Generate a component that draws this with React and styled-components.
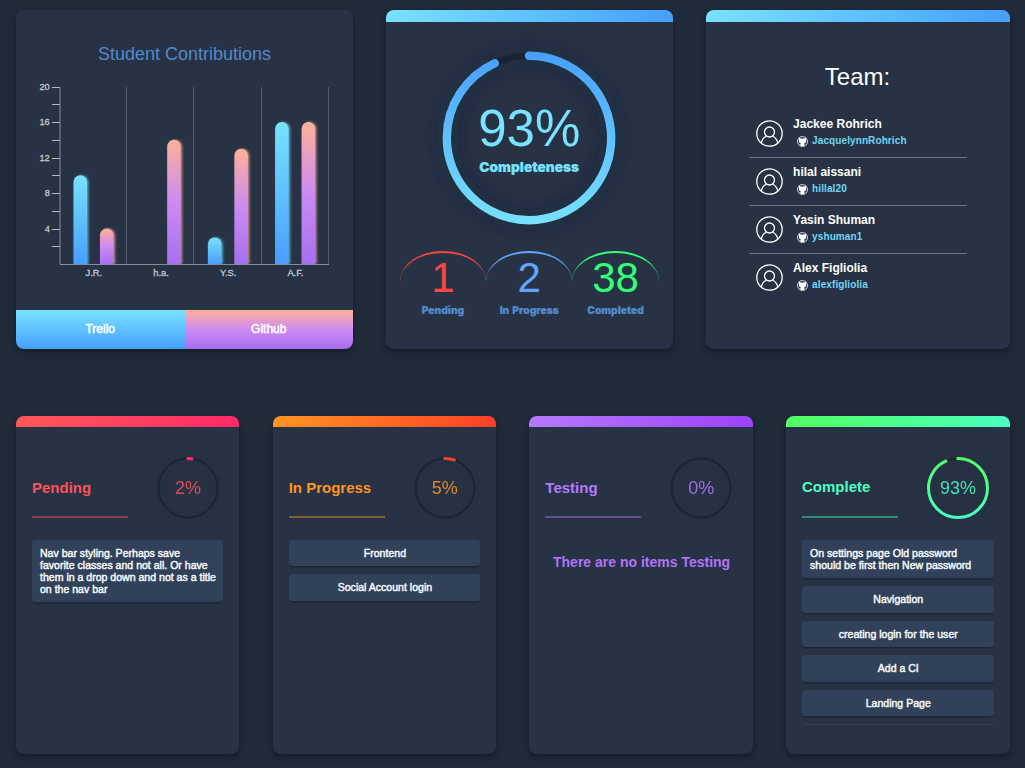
import React from "react";
import styled, { createGlobalStyle } from "styled-components";

const Global = createGlobalStyle`
  * { box-sizing: border-box; }
  body {
    margin: 0;
    background: #202b3a;
    font-family: "Liberation Sans", Arial, sans-serif;
    overflow: hidden;
  }
`;

const Page = styled.main`
  width: 1025px;
  height: 768px;
  padding: 10px 15.5px 0 16px;
  display: flex;
  flex-direction: column;
  gap: 67.5px;
`;

const TopRow = styled.section`
  display: grid;
  grid-template-columns: 337px 287px 304px;
  justify-content: space-between;
  height: 338.5px;
`;

const BoardRow = styled.section`
  display: grid;
  grid-template-columns: repeat(4, 1fr);
  column-gap: 33.2px;
  height: 338px;
`;

const Card = styled.article`
  display: flex;
  flex-direction: column;
  min-width: 0;
  border-radius: 8px;
  overflow: hidden;
  background: #273245;
  box-shadow: 0 3px 6px rgba(10, 16, 26, 0.55);
`;

const CardBar = styled.div`
  flex: none;
  height: ${(p) => (p.$thin ? 11 : 11.5)}px;
  background: linear-gradient(90deg, ${(p) => p.$from}, ${(p) => p.$to});
`;

const ChartTitle = styled.h2`
  margin: 33.5px 0 0;
  font-size: 18px;
  line-height: 21px;
  font-weight: 400;
  text-align: center;
  color: #5389c9;
`;

const ChartSvg = styled.svg`
  display: block;
  margin-top: 12.5px;
  flex: none;
  text {
    font: 9.3px "Liberation Sans", Arial, sans-serif;
    fill: #c3c8cf;
    stroke: #c3c8cf;
    stroke-width: 0.3px;
  }
`;

const Tabs = styled.div`
  display: grid;
  grid-template-columns: 1fr 1fr;
  height: 38.5px;
  margin-top: auto;
`;

const Tab = styled.button`
  border: 0;
  padding: 0;
  font: 12px "Liberation Sans", Arial, sans-serif;
  -webkit-text-stroke: 0.5px #fff;
  color: #fff;
  background: ${(p) =>
    p.$pink
      ? "linear-gradient(#ffb199, #cc8bf2 50%, #a66ff0)"
      : "linear-gradient(#78e2ff, #479fff)"};
`;

const RingBox = styled.div`
  display: grid;
  place-items: center;
  width: ${(p) => p.$size}px;
  height: ${(p) => p.$size}px;
  flex: none;
  > * { grid-area: 1 / 1; }
  svg { overflow: visible; }
`;

const BigRingArea = styled.div`
  display: flex;
  justify-content: center;
  padding-top: 29px;
`;

const BigLabel = styled.div`
  display: flex;
  flex-direction: column;
  align-items: center;
  color: #78e2ff;
`;

const BigPercent = styled.span`
  font-size: 51px;
  line-height: 58px;
  margin-bottom: 1px;
`;

const HeavyText = styled.span`
  font-family: Inter, "Liberation Sans", sans-serif;
  font-weight: 900;
  font-size: ${(p) => p.$size}px;
  line-height: 16px;
  word-spacing: 1px;
  -webkit-text-stroke: 0.2px currentColor;
`;

const Stats = styled.div`
  display: grid;
  grid-template-columns: repeat(3, 86.3px);
  justify-content: center;
  margin-top: 26.5px;
`;

const Stat = styled.div`
  height: 60px;
  border-top: 2px solid ${(p) => p.$color};
  border-radius: 50%;
  display: flex;
  flex-direction: column;
  align-items: center;
  color: #5189c9;
  white-space: nowrap;
`;

const StatNumber = styled.span`
  font-size: 42px;
  line-height: 49px;
  color: ${(p) => p.$color};
`;

const TeamTitle = styled.h2`
  margin: 41px 0 19.5px;
  font-size: 24px;
  line-height: 28px;
  font-weight: 400;
  text-align: center;
  color: #fff;
`;

const Members = styled.ul`
  list-style: none;
  margin: 0 auto;
  padding: 0;
  width: 218px;
`;

const Member = styled.li`
  display: flex;
  height: 48px;
  padding: 7px 0 0 7px;
  gap: 10.6px;
  border-bottom: 1px solid #6b7582;
  &:last-child { border-bottom-color: transparent; }
  > svg { margin-top: 3px; flex: none; }
`;

const MemberName = styled.div`
  font-size: 12px;
  line-height: 14px;
  font-weight: 700;
  color: #fff;
`;

const Handle = styled.div`
  display: flex;
  align-items: center;
  gap: 4px;
  margin: 4px 0 0 4px;
  font-size: 10px;
  line-height: 12px;
  font-weight: 700;
  letter-spacing: 0.1px;
  color: #71d6f3;
`;

const ColumnHead = styled.header`
  display: flex;
  justify-content: space-between;
  padding: 29.5px 20.5px 0 16px;
`;

const ColumnTitle = styled.h3`
  margin: ${(p) => 22 - p.$lift}px 0 0;
  width: 96px;
  height: ${(p) => 39 + p.$lift}px;
  font-size: 15px;
  line-height: 17px;
  white-space: nowrap;
  color: ${(p) => p.$color};
  border-bottom: 2px solid ${(p) => p.$line};
`;

const SmallPercent = styled.span`
  font-size: 18px;
  line-height: 20px;
  color: ${(p) => p.$color};
  opacity: 0.85;
`;

const Items = styled.div`
  display: flex;
  flex-direction: column;
  gap: 8.1px;
  margin: 21.3px 16px 0;
  height: 185.7px;
  overflow: hidden;
`;

const Item = styled.div`
  flex: none;
  min-height: 26.4px;
  padding: 7.2px 7px 7.2px 8px;
  border-radius: 3px;
  background: #314159;
  box-shadow: 0 1px 2px rgba(12, 18, 28, 0.5);
  font-size: 10.55px;
  line-height: 12px;
  -webkit-text-stroke: 0.45px #f6f8fa;
  color: #f6f8fa;
  text-align: ${(p) => (p.$long ? "left" : "center")};
`;

const Empty = styled.p`
  margin: 35px 0 0 1px;
  font-size: 14px;
  line-height: 16px;
  font-weight: 700;
  text-align: center;
  color: #b174f6;
`;

const bars = [
  { name: "J.R.", trello: 10, github: 4 },
  { name: "h.a.", trello: 0, github: 14 },
  { name: "Y.S.", trello: 3, github: 13 },
  { name: "A.F.", trello: 16, github: 16 },
];

function Bar({ x, value, kind }) {
  if (!value) return null;
  const h = value * 8.87;
  const top = 187 - h;
  const r = 6.75;
  return (
    <path
      d={`M${x} 187V${top + r}a${r} ${r} 0 0 1 ${2 * r} 0V187z`}
      fill={`url(#${kind})`}
      filter={`url(#${kind}Glow)`}
    />
  );
}

function Chart() {
  return (
    <ChartSvg width="337" height="210" viewBox="0 0 337 210">
      <defs>
        <linearGradient id="trello" x1="0" y1="0" x2="0" y2="1">
          <stop stopColor="#78e2ff" />
          <stop offset="1" stopColor="#479fff" />
        </linearGradient>
        <linearGradient id="github" x1="0" y1="0" x2="0" y2="1">
          <stop stopColor="#ffb199" />
          <stop offset=".5" stopColor="#cc8bf2" />
          <stop offset="1" stopColor="#a66ff0" />
        </linearGradient>
        <filter id="trelloGlow" x="-50%" y="-10%" width="220%" height="110%">
          <feDropShadow dx="1.5" dy="0" stdDeviation="1.2" floodColor="#78e2ff" floodOpacity=".65" />
        </filter>
        <filter id="githubGlow" x="-50%" y="-10%" width="220%" height="110%">
          <feDropShadow dx="1.5" dy="0" stdDeviation="1.2" floodColor="#ffb199" floodOpacity=".7" />
        </filter>
      </defs>
      {[1, 2, 3, 4].map((n) => (
        <path key={n} d={`M${Math.round(44 + n * 67.2) - 0.5} 10V187`} stroke="#525c6a" />
      ))}
      {Array.from({ length: 10 }, (_, i) => (
        <path key={i} d={`M36 ${Math.floor(10 + i * 17.75) + 0.5}H44`} stroke="#b6bcc4" />
      ))}
      {[20, 16, 12, 8, 4].map((n, i) => (
        <text key={n} x="33.8" y={Math.floor(13 + i * 35.5)} textAnchor="end">{n}</text>
      ))}
      {bars.map((b, i) => (
        <g key={b.name}>
          <Bar x={57.5 + i * 67.2} value={b.trello} kind="trello" />
          <Bar x={84 + i * 67.2} value={b.github} kind="github" />
          <text x={77.8 + i * 67.2} y="199" textAnchor="middle">{b.name}</text>
        </g>
      ))}
      <path d="M44 10V187.5H313" fill="none" stroke="#858d98" />
    </ChartSvg>
  );
}

function Ring({ id, size, r, width, value, from, to, round, children }) {
  const c = size / 2;
  const len = 2 * Math.PI * r;
  return (
    <RingBox $size={size}>
      <svg width={size} height={size} viewBox={`0 0 ${size} ${size}`}>
        <defs>
          <linearGradient id={id} gradientUnits="userSpaceOnUse" x1="0" y1="0" x2="0" y2={size}>
            <stop stopColor={from} />
            <stop offset="1" stopColor={to} />
          </linearGradient>
          <filter id={`${id}Shade`} x="-40%" y="-40%" width="180%" height="180%">
            <feGaussianBlur stdDeviation={round ? 11 : 8} />
          </filter>
        </defs>
        <circle cx={c} cy={c} r={r} fill="none" stroke="#182130" strokeOpacity={round ? 0.55 : 0.2}
          strokeWidth={width + 2} filter={`url(#${id}Shade)`} />
        <circle cx={c} cy={c} r={r} fill="none" stroke="#1b2332" strokeWidth={round ? width - 2 : width} />
        {value > 0 && (
          <path
            d={`M${c} ${c - r}A${r} ${r} 0 1 1 ${c} ${c + r}A${r} ${r} 0 0 1 ${c} ${c - r}`}
            fill="none"
            stroke={`url(#${id})`}
            strokeWidth={round ? width : width + 1}
            strokeLinecap={round ? "round" : "square"}
            strokeDasharray={`${(len * value) / 100} ${len}`}
          />
        )}
      </svg>
      {children}
    </RingBox>
  );
}

function Avatar() {
  return (
    <svg width="27" height="27" viewBox="0 0 27 27" fill="none" stroke="#fff" strokeWidth="1.3">
      <circle cx="13.5" cy="13.5" r="12.7" />
      <circle cx="13.5" cy="12" r="5" />
      <path d="M5.2 22.8C6.2 19 8.2 17 10.6 16M21.8 22.8C20.8 19 18.8 17 16.4 16" />
    </svg>
  );
}

function GithubMark() {
  return (
    <svg width="11" height="11" viewBox="0 0 11 11">
      <circle cx="5.5" cy="5.5" r="5" fill="none" stroke="#fff" strokeWidth=".8" />
      <path
        d="M2.2 1.8L3.9 2.5h3.2l1.7-.7.3 1.900c.5 2-.4 3.400-2 3.800.3.300.3.700.3 1.100v1.700H3.600V9.200L2.400 8.200l1.300.1c0-.4 0-.6.2-.8C2.200 7.100 1.400 5.700 1.900 3.700z"
        fill="#fff"
      />
    </svg>
  );
}

const team = [
  ["Jackee Rohrich", "JacquelynnRohrich"],
  ["hilal aissani", "hillal20"],
  ["Yasin Shuman", "yshuman1"],
  ["Alex Figliolia", "alexfigliolia"],
];

const stats = [
  { n: 1, label: "Pending", color: "#ff4444" },
  { n: 2, label: "In Progress", color: "#60a5ff" },
  { n: 38, label: "Completed", color: "#33ff77" },
];

const columns = [
  {
    title: "Pending", value: 2, bar: ["#ff5858", "#ff2a68"], ring: ["#ff2a68", "#ff5858"],
    color: "#ff5158", line: "#8b4150",
    items: ["Nav bar styling. Perhaps save favorite classes and not all. Or have them in a drop down and not as a title on the nav bar"],
  },
  {
    title: "In Progress", value: 5, bar: ["#ff9520", "#ff3f27"], ring: ["#ff3f27", "#ff9520"],
    color: "#ff9322", line: "#875b31",
    items: ["Frontend", "Social Account login"],
  },
  {
    title: "Testing", value: 0, bar: ["#b57afb", "#9c42fb"], ring: ["#9c42fb", "#b57afb"],
    color: "#b57afb", line: "#644d8d", items: [],
  },
  {
    title: "Complete", value: 93, bar: ["#52ff60", "#4affc0"], ring: ["#52ff60", "#4affc0"],
    color: "#4affc0", line: "#328a76", lift: 1,
    items: [
      "On settings page Old password should be first then New password",
      "Navigation", "creating login for the user", "Add a CI", "Landing Page", "",
    ],
  },
];

export default function App() {
  return (
    <>
      <Global />
      <Page>
        <TopRow>
          <Card>
            <ChartTitle>Student Contributions</ChartTitle>
            <Chart />
            <Tabs>
              <Tab>Trello</Tab>
              <Tab $pink>Github</Tab>
            </Tabs>
          </Card>
          <Card>
            <CardBar $from="#78e2ff" $to="#479fff" />
            <BigRingArea>
              <Ring id="overall" size={174} r={82.2} width={8.4} value={93} from="#479fff" to="#78e2ff" round>
                <BigLabel>
                  <BigPercent>93%</BigPercent>
                  <HeavyText $size={13.7}>Completeness</HeavyText>
                </BigLabel>
              </Ring>
            </BigRingArea>
            <Stats>
              {stats.map((s) => (
                <Stat key={s.label} $color={s.color}>
                  <StatNumber $color={s.color}>{s.n}</StatNumber>
                  <HeavyText $size={10.3}>{s.label}</HeavyText>
                </Stat>
              ))}
            </Stats>
          </Card>
          <Card>
            <CardBar $from="#78e2ff" $to="#479fff" />
            <TeamTitle>Team:</TeamTitle>
            <Members>
              {team.map(([name, handle]) => (
                <Member key={handle}>
                  <Avatar />
                  <div>
                    <MemberName>{name}</MemberName>
                    <Handle><GithubMark />{handle}</Handle>
                  </div>
                </Member>
              ))}
            </Members>
          </Card>
        </TopRow>
        <BoardRow>
          {columns.map((c) => (
            <Card key={c.title}>
              <CardBar $thin $from={c.bar[0]} $to={c.bar[1]} />
              <ColumnHead>
                <ColumnTitle $color={c.color} $line={c.line} $lift={c.lift || 0}>{c.title}</ColumnTitle>
                <Ring id={`ring${c.value}`} size={62} r={29.5} width={2} value={c.value} from={c.ring[0]} to={c.ring[1]}>
                  <SmallPercent $color={c.color}>{c.value}%</SmallPercent>
                </Ring>
              </ColumnHead>
              {c.items.length ? (
                <Items>
                  {c.items.map((t) => (
                    <Item key={t} $long={t.length > 30}>{t}</Item>
                  ))}
                </Items>
              ) : (
                <Empty>There are no items {c.title}</Empty>
              )}
            </Card>
          ))}
        </BoardRow>
      </Page>
    </>
  );
}
